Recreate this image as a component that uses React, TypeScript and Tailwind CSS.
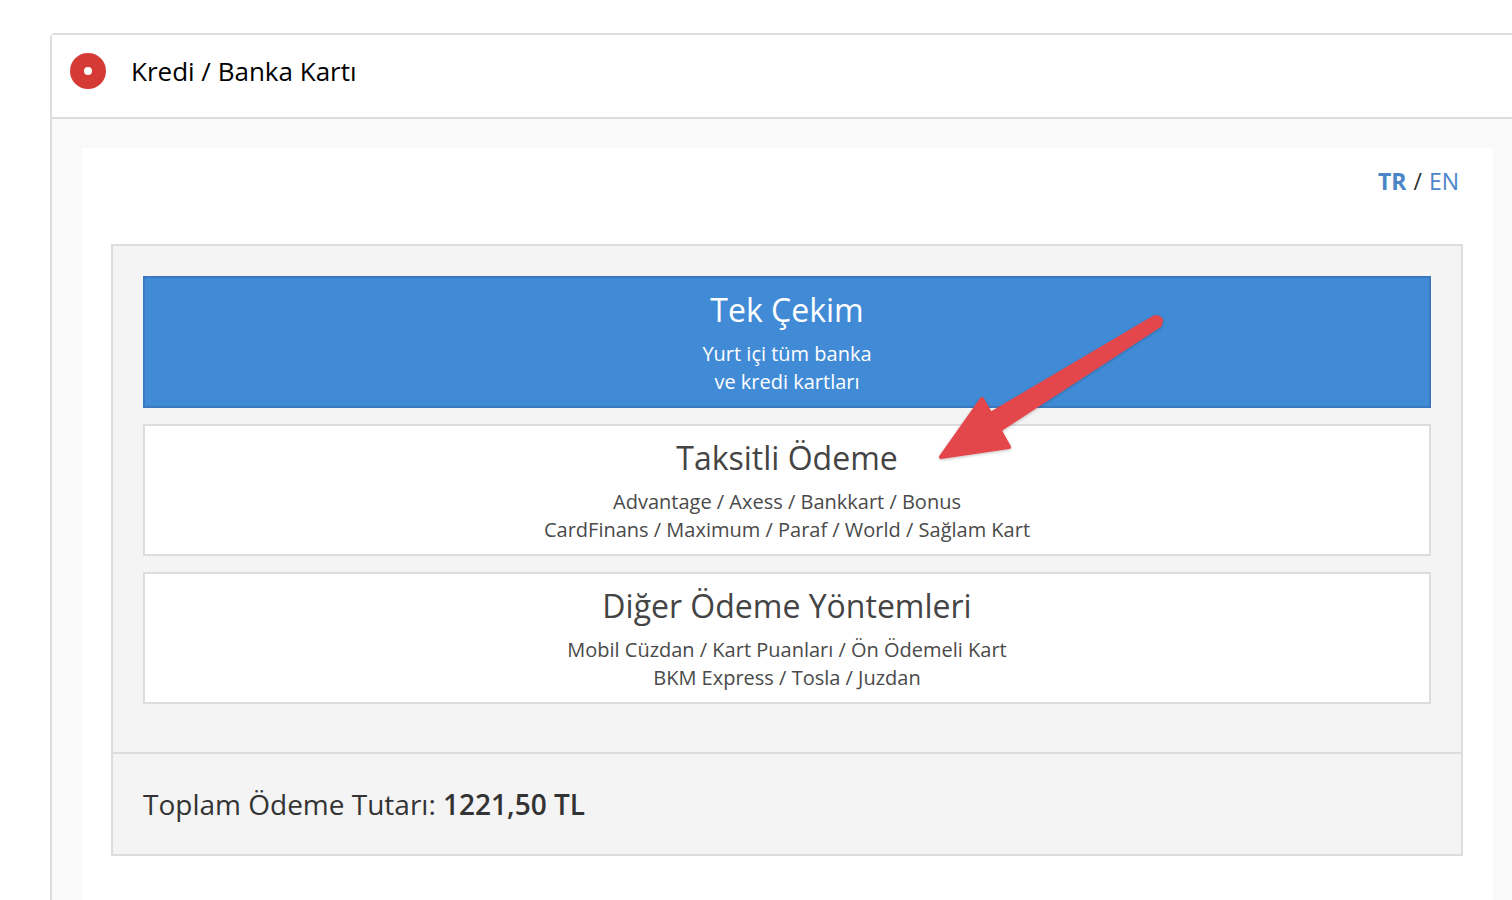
import React from "react";

const font = { fontFamily: '"Open Sans", "Noto Sans", sans-serif' };

type Option = { title: string; lines: string[]; active?: boolean };

const options: Option[] = [
  { title: "Tek Çekim", lines: ["Yurt içi tüm banka", "ve kredi kartları"], active: true },
  {
    title: "Taksitli Ödeme",
    lines: ["Advantage / Axess / Bankkart / Bonus", "CardFinans / Maximum / Paraf / World / Sağlam Kart"],
  },
  {
    title: "Diğer Ödeme Yöntemleri",
    lines: ["Mobil Cüzdan / Kart Puanları / Ön Ödemeli Kart", "BKM Express / Tosla / Juzdan"],
  },
];

function PayOption({ option }: { option: Option }) {
  return (
    <div
      className={
        "border-2 pt-3 pb-[10px] text-center " +
        (option.active
          ? "border-[#3a79c0] bg-[#418bd6] text-white"
          : "border-[#dddddd] bg-white text-[#444444]")
      }
    >
      <div className="h-10 text-[32px] leading-10">{option.title}</div>
      <div className={"mt-[10px] text-[20px] leading-7 " + (option.active ? "" : "text-[#4a4a4a]")}>
        {option.lines.map((l) => (
          <div key={l}>{l}</div>
        ))}
      </div>
    </div>
  );
}

function Arrow() {
  return (
    <svg
      className="pointer-events-none absolute left-0 top-0"
      width="1512"
      height="900"
      viewBox="0 0 1512 900"
    >
      <defs>
        <filter id="sh" x="-20%" y="-20%" width="140%" height="140%">
          <feDropShadow dx="0" dy="1" stdDeviation="1.5" floodColor="#000" floodOpacity="0.25" />
        </filter>
      </defs>
      <g filter="url(#sh)" fill="#e4474c" stroke="#e4474c" strokeLinejoin="round" strokeWidth="4">
        <path d="M1155 317 L990.5 414 L982 399 L941 457 L1009 447 L999.5 430 L1160 325 Z" />
        <circle cx="1157.5" cy="321" r="3.5" />
      </g>
    </svg>
  );
}

export default function App() {
  return (
    <div className="relative h-[900px] w-[1512px] overflow-hidden bg-white" style={font}>
      <div className="ml-[50px] mt-[33px] w-[1500px] rounded-tl-[5px] border-2 border-[#dddddd]">
        <div className="h-[84px] border-b-2 border-[#dddddd] bg-white pl-[18px] pt-[18px]">
          <div className="flex h-9 items-center">
            <div className="flex h-9 w-9 items-center justify-center rounded-full bg-[#d63a35]">
              <div className="h-[8px] w-[8px] rounded-full bg-white" />
            </div>
            <span className="ml-[25px] text-[26px] leading-9 text-black">Kredi / Banka Kartı</span>
          </div>
        </div>
        <div className="bg-[#f9f9f9] pl-[30px] pt-[29px]">
          <div className="h-[800px] w-[1411px] bg-white px-[29px]">
            <div className="flex h-[96px] items-start justify-end pr-[5px] pt-[18px] text-[23px] leading-[30px]">
              <span className="font-bold text-[#4a85c7]">TR</span>
              <span className="mx-[7px] text-[#333]">/</span>
              <span className="text-[#4a85c7]">EN</span>
            </div>
            <div className="w-[1352px] border-2 border-[#dddddd] bg-[#f4f4f4]">
              <div className="flex flex-col gap-4 px-[30px] pb-[48px] pt-[30px]">
                {options.map((o) => (
                  <PayOption key={o.title} option={o} />
                ))}
              </div>
              <div className="flex h-[102px] items-center border-t-2 border-[#dddddd] pl-[30px] text-[28px] text-[#333333]">
                <span>Toplam Ödeme Tutarı:&nbsp;</span>
                <span className="font-semibold">1221,50 TL</span>
              </div>
            </div>
          </div>
        </div>
      </div>
      <Arrow />
    </div>
  );
}
